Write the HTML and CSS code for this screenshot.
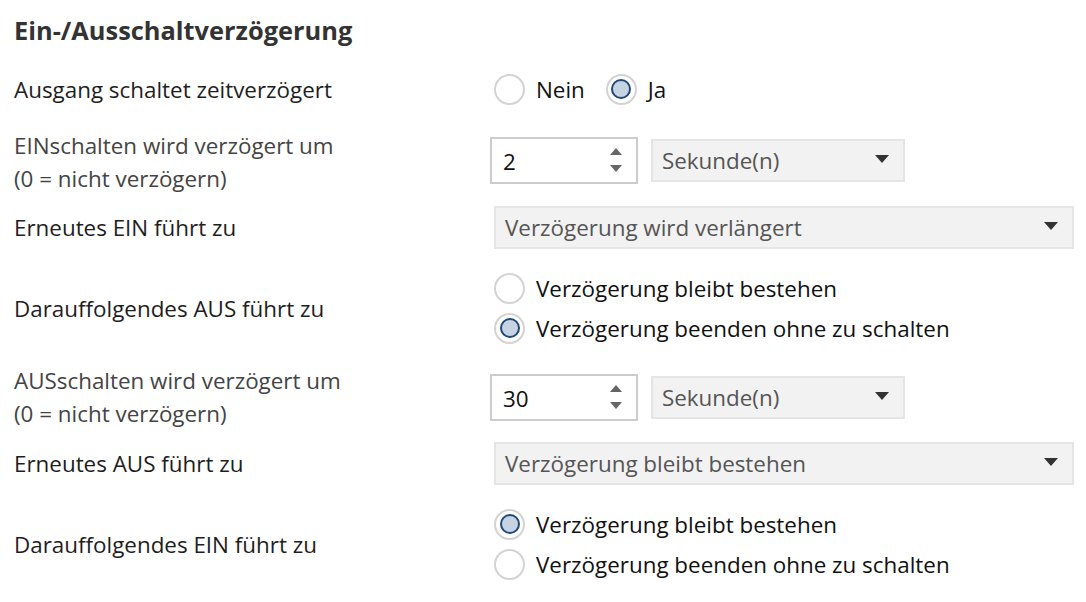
FILE: index.html
```html
<!DOCTYPE html>
<html lang="de">
<head>
<meta charset="utf-8">
<title>Ein-/Ausschaltverzögerung</title>
<link rel="stylesheet" href="styles.css">
</head>
<body>
<div class="page">
  <h1 class="title">Ein-/Ausschaltverzögerung</h1>

  <div class="row r1">
    <div class="label">Ausgang schaltet zeitverzögert</div>
    <div class="control inline-radios">
      <label class="radio"><span class="dot"></span><span class="rtext">Nein</span></label>
      <label class="radio checked"><span class="dot"></span><span class="rtext">Ja</span></label>
    </div>
  </div>

  <div class="row r2">
    <div class="label muted">EINschalten wird verzögert um<br>(0 = nicht verzögern)</div>
    <div class="control pair">
      <div class="spin"><span class="num">2</span><span class="arrows"><span class="up"></span><span class="down"></span></span></div>
      <div class="select short"><span class="stext">Sekunde(n)</span><span class="caret"></span></div>
    </div>
  </div>

  <div class="row r3">
    <div class="label">Erneutes EIN führt zu</div>
    <div class="control">
      <div class="select wide"><span class="stext">Verzögerung wird verlängert</span><span class="caret"></span></div>
    </div>
  </div>

  <div class="row r4">
    <div class="label">Darauffolgendes AUS führt zu</div>
    <div class="control stack">
      <label class="radio"><span class="dot"></span><span class="rtext">Verzögerung bleibt bestehen</span></label>
      <label class="radio checked"><span class="dot"></span><span class="rtext">Verzögerung beenden ohne zu schalten</span></label>
    </div>
  </div>

  <div class="row r5">
    <div class="label muted">AUSschalten wird verzögert um<br>(0 = nicht verzögern)</div>
    <div class="control pair">
      <div class="spin"><span class="num">30</span><span class="arrows"><span class="up"></span><span class="down"></span></span></div>
      <div class="select short"><span class="stext">Sekunde(n)</span><span class="caret"></span></div>
    </div>
  </div>

  <div class="row r6">
    <div class="label">Erneutes AUS führt zu</div>
    <div class="control">
      <div class="select wide"><span class="stext">Verzögerung bleibt bestehen</span><span class="caret"></span></div>
    </div>
  </div>

  <div class="row r7">
    <div class="label">Darauffolgendes EIN führt zu</div>
    <div class="control stack">
      <label class="radio checked"><span class="dot"></span><span class="rtext">Verzögerung bleibt bestehen</span></label>
      <label class="radio"><span class="dot"></span><span class="rtext">Verzögerung beenden ohne zu schalten</span></label>
    </div>
  </div>
</div>
</body>
</html>
```

FILE: styles.css
```css
html, body {
  margin: 0;
  padding: 0;
  background: #ffffff;
}

body {
  font-family: "Open Sans", "Noto Sans", sans-serif;
  font-size: 22.4px;
  color: #1e1e1e;
}

.page {
  padding: 0 12px 0 14px;
}

.title {
  margin: 0;
  height: 59px;
  padding-top: 13px;
  box-sizing: border-box;
  font-size: 25.4px;
  font-weight: 700;
  color: #333333;
  line-height: 34px;
}

.row {
  display: grid;
  grid-template-columns: 476px 1fr;
  align-items: center;
}

.r1 { height: 60px; }
.r2 { height: 82px; }
.r3 { height: 52px; }
.r4 { height: 110px; }
.r5 { height: 68px; }
.r6 { height: 64px; }
.r7 { height: 98px; }

.label {
  line-height: 33px;
  color: #1e1e1e;
}

.r2 .label {
  margin-top: 4px;
}

.label.muted {
  color: #444444;
}

.control {
  display: flex;
  align-items: center;
}

/* radios */
.inline-radios {
  padding-left: 4px;
  gap: 21px;
}

.stack {
  flex-direction: column;
  align-items: flex-start;
  padding-left: 4px;
  gap: 9px;
}

.radio {
  display: flex;
  align-items: center;
  gap: 11px;
  color: #111111;
}

.dot {
  width: 31px;
  height: 31px;
  flex: none;
  box-sizing: border-box;
  border: 2px solid #d3d3d3;
  border-radius: 50%;
  display: flex;
  align-items: center;
  justify-content: center;
  background: #ffffff;
}

.checked .dot::after {
  content: "";
  width: 20px;
  height: 20px;
  box-sizing: border-box;
  border: 2px solid #1f4a7a;
  border-radius: 50%;
  background: #c6d3e2;
}

.rtext {
  line-height: 31px;
}

/* spin box */
.pair {
  gap: 13px;
}

.spin {
  width: 148px;
  height: 47px;
  box-sizing: border-box;
  border: 2px solid #cccccc;
  display: flex;
  align-items: center;
  justify-content: space-between;
  padding: 3px 14px 0 11px;
  color: #111111;
  background: #ffffff;
}

.arrows {
  display: flex;
  flex-direction: column;
  gap: 10px;
  margin-top: -4px;
}

.up, .down {
  width: 0;
  height: 0;
  border-left: 6px solid transparent;
  border-right: 6px solid transparent;
}

.up {
  border-bottom: 7px solid #666666;
}

.down {
  border-top: 7px solid #666666;
}

/* selects */
.select {
  height: 43px;
  box-sizing: border-box;
  border: 2px solid #e5e5e5;
  background: #f2f2f2;
  display: flex;
  align-items: center;
  justify-content: space-between;
  padding: 0 14px 0 9px;
  color: #555555;
}

.select.short {
  width: 254px;
}

.select.wide {
  width: 580px;
  margin-left: 4px;
}

.caret {
  width: 0;
  height: 0;
  border-left: 7px solid transparent;
  border-right: 7px solid transparent;
  border-top: 8px solid #333333;
  margin-top: -2px;
}
```
